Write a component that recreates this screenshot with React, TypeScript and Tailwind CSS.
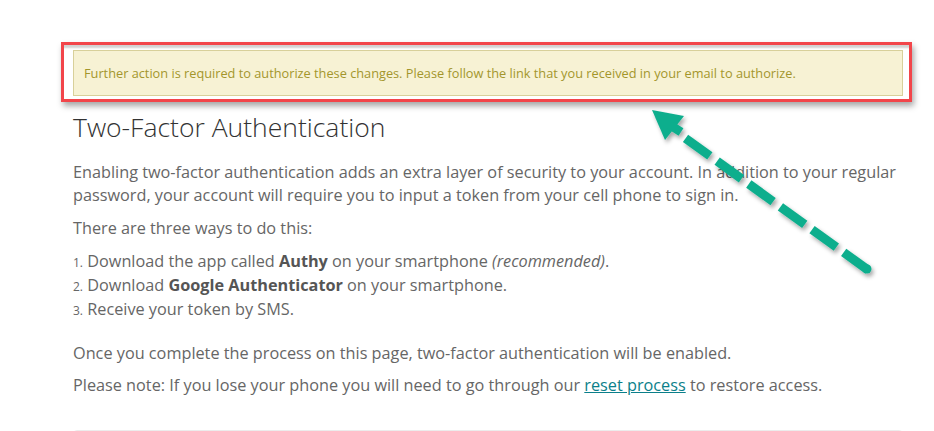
import React from "react";

function Arrow() {
  return (
    <svg className="absolute left-0 top-0 pointer-events-none" width="934" height="431" viewBox="0 0 934 431">
      <defs>
        <filter id="sh" x="-20%" y="-20%" width="140%" height="140%">
          <feDropShadow dx="2" dy="3" stdDeviation="2" floodColor="#000" floodOpacity="0.35" />
        </filter>
      </defs>
      <g filter="url(#sh)" fill="#10ae8d" stroke="#10ae8d">
        <polygon points="652,110 684,116 665,140" stroke="none" />
        <line x1="670" y1="125" x2="681" y2="132" strokeWidth="9" />
        <line x1="868" y1="270" x2="685" y2="138" strokeWidth="9" strokeDasharray="30 9" />
        <circle cx="867" cy="269" r="4.5" stroke="none" />
      </g>
    </svg>
  );
}

export default function App() {
  return (
    <div className="relative w-[934px] h-[431px] overflow-hidden bg-white text-[#666] font-['Open_Sans',sans-serif]">
      <div className="pt-[50px] pl-[73px] w-[903px]">
        <div className="border border-[#d8d09a] bg-[#f7f2d4] px-[10px] py-[13px] text-[12.75px] leading-[18px] text-[#a3962c]">
          Further action is required to authorize these changes. Please follow the link that you received in your email to authorize.
        </div>

        <h1 className="mt-[13px] text-[26.5px] leading-[36px] font-light text-[#333]">Two-Factor Authentication</h1>

        <div className="text-[16.25px] leading-[23px]">
          <p className="mt-[16px]">
            Enabling two-factor authentication adds an extra layer of security to your account. In addition to your regular password, your account will require you to input a token from your cell phone to sign in.
          </p>
          <p className="mt-[10px]">There are three ways to do this:</p>
          <ol className="mt-[10px]">
            <li>
              <span className="text-[12px]">1.</span> Download the app called <b className="font-bold text-[#555]">Authy</b> on your smartphone <i>(recommended)</i>.
            </li>
            <li>
              <span className="text-[12px]">2.</span> Download <b className="font-bold text-[#555]">Google Authenticator</b> on your smartphone.
            </li>
            <li>
              <span className="text-[12px]">3.</span> Receive your token by SMS.
            </li>
          </ol>
          <p className="mt-[20px]">Once you complete the process on this page, two-factor authentication will be enabled.</p>
          <p className="mt-[9px]">
            Please note: If you lose your phone you will need to go through our{" "}
            <a href="#" className="text-[#0b7f8a] underline">reset process</a> to restore access.
          </p>
        </div>

        <div className="mt-[33px] h-[40px] rounded-t-[4px] border border-[#ececec] bg-[#fafafa]" />
      </div>

      <div className="absolute left-[61px] top-[42px] w-[851px] h-[60px] border-[3px] border-[#f2454a] shadow-[2px_4px_6px_rgba(0,0,0,0.35),inset_0_5px_2px_-2px_rgba(0,0,0,0.18)]" />
      <Arrow />
    </div>
  );
}
